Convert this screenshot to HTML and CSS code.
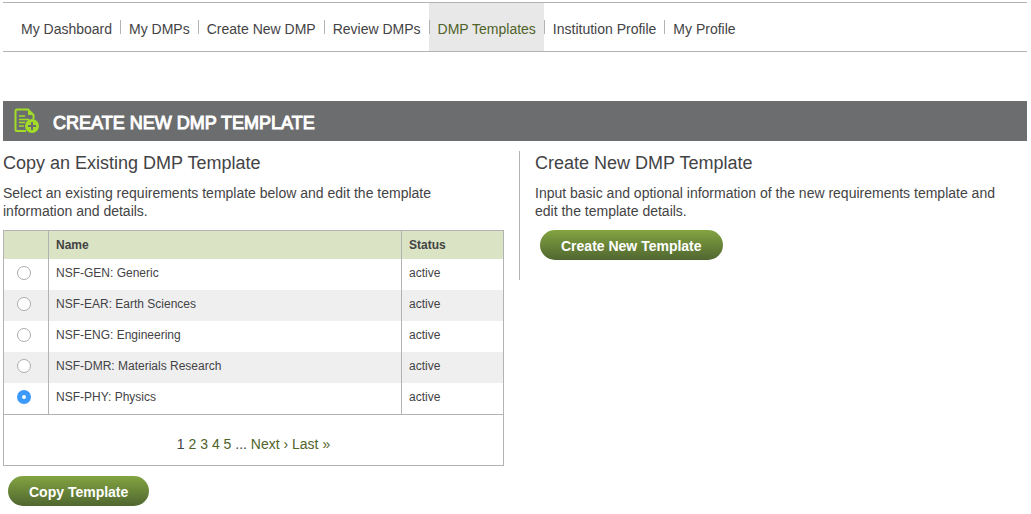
FILE: index.html
```html
<!DOCTYPE html>
<html lang="en">
<head>
<meta charset="utf-8">
<title>Create New DMP Template</title>
<link rel="stylesheet" href="styles.css">
</head>
<body>
<nav class="main-nav">
  <a href="#">My Dashboard</a>
  <a href="#">My DMPs</a>
  <a href="#">Create New DMP</a>
  <a href="#">Review DMPs</a>
  <a href="#" class="current" aria-current="page">DMP Templates</a>
  <a href="#">Institution Profile</a>
  <a href="#">My Profile</a>
</nav>
<main>
  <header class="title-bar">
    <svg class="title-icon" viewBox="0 0 26 26" aria-hidden="true">
      <path d="M12 23H3Q1.500 23 1.500 21.500V3Q1.500 1.500 3 1.500H14L19.500 7V11" fill="none" stroke="#a0dc28" stroke-width="2"/>
      <path d="M14 1V7H20Z" fill="#a0dc28"/>
      <path d="M5 8H11M5 11.500H15M5 14.500H11M5 18H10" fill="none" stroke="#a0dc28" stroke-width="1.500"/>
      <circle cx="18" cy="18" r="7" fill="#a0dc28"/>
      <path d="M18 14V22M14 18H22" stroke="#6c6d6f" stroke-width="2"/>
    </svg>
    <h1>CREATE NEW DMP TEMPLATE</h1>
  </header>
  <div class="columns">
    <section class="copy">
      <h2>Copy an Existing DMP Template</h2>
      <p>Select an existing requirements template below and edit the template information and details.</p>
      <form>
        <table class="templates">
          <thead>
            <tr><th class="pick" aria-label="Select"></th><th>Name</th><th class="status">Status</th></tr>
          </thead>
          <tbody>
            <tr><td class="pick"><input type="radio" name="template" id="gen"></td><td><label for="gen">NSF-GEN: Generic</label></td><td>active</td></tr>
            <tr><td class="pick"><input type="radio" name="template" id="ear"></td><td><label for="ear">NSF-EAR: Earth Sciences</label></td><td>active</td></tr>
            <tr><td class="pick"><input type="radio" name="template" id="eng"></td><td><label for="eng">NSF-ENG: Engineering</label></td><td>active</td></tr>
            <tr><td class="pick"><input type="radio" name="template" id="dmr"></td><td><label for="dmr">NSF-DMR: Materials Research</label></td><td>active</td></tr>
            <tr><td class="pick"><input type="radio" name="template" id="phy" checked></td><td><label for="phy">NSF-PHY: Physics</label></td><td>active</td></tr>
          </tbody>
        </table>
        <div class="pages">
          <span>1</span> <a href="#">2</a> <a href="#">3</a> <a href="#">4</a> <a href="#">5</a> ... <a href="#">Next ›</a> <a href="#">Last »</a>
        </div>
        <button type="button" class="pill">Copy Template</button>
      </form>
    </section>
    <section class="create">
      <h2>Create New DMP Template</h2>
      <p>Input basic and optional information of the new requirements template and edit the template details.</p>
      <button type="button" class="pill">Create New Template</button>
    </section>
  </div>
</main>
</body>
</html>
```
FILE: styles.css
```css
* {
  box-sizing: border-box;
}

body {
  margin: 0;
  padding: 2px 4px 8px 3px;
  background: #fff;
  color: #434345;
  font: 14px/18px "Liberation Sans", Arial, Helvetica, sans-serif;
}

a {
  color: #4f6228;
  text-decoration: none;
}

.main-nav {
  display: flex;
  height: 50px;
  padding-left: 9px;
  border-top: 1px solid #b3b3b3;
  border-bottom: 1px solid #b3b3b3;
}

.main-nav a {
  display: flex;
  align-items: center;
  padding: 4px 8px 0 9px;
  color: #434345;
  background: linear-gradient(#b3b3b3, #b3b3b3) 0 17px / 1px 14px no-repeat;
}

.main-nav a:first-child {
  background: none;
}

.main-nav a.current {
  color: #4f6228;
  background-color: #e8e8e8;
}

.title-bar {
  display: flex;
  align-items: center;
  gap: 13px;
  height: 40px;
  margin-top: 49px;
  padding-left: 11px;
  background: #6c6d6f;
  color: #fff;
}

.title-icon {
  width: 26px;
  height: 26px;
}

h1 {
  margin: 0;
  padding-top: 3px;
  font-size: 18px;
  line-height: 22px;
  font-weight: normal;
  -webkit-text-stroke: 1px #fff;
}

.columns {
  display: grid;
  grid-template-columns: 501px minmax(0, 1fr);
  gap: 15px;
  align-items: start;
  padding-top: 10px;
}

h2 {
  margin: 0 0 9px;
  font-size: 18px;
  line-height: 24px;
  font-weight: normal;
}

p {
  margin: 0 0 10px;
  padding-right: 24px;
}

.copy p {
  padding-right: 60px;
}

.create {
  min-height: 129px;
  padding-left: 15px;
  border-left: 1px solid #b3b3b3;
}

.templates {
  width: 100%;
  table-layout: fixed;
  border-collapse: collapse;
  border: 1px solid #b3b3b3;
  font-size: 12px;
  line-height: 16px;
}

.templates th,
.templates td {
  height: 31px;
  padding: 0 7px 2px;
  border-left: 1px solid #b3b3b3;
  text-align: left;
}

.templates th {
  height: 28px;
  padding-bottom: 0;
  background: #dae4c4;
}

.templates .pick {
  width: 45px;
  padding: 0;
  text-align: center;
}

.templates .status {
  width: 102px;
}

.templates tbody tr:nth-child(even) {
  background: #efefef;
}

.templates tbody tr:last-child td {
  height: 32px;
}

input[type="radio"] {
  appearance: none;
  display: block;
  width: 14px;
  height: 14px;
  margin: 0 0 2px 13px;
  border: 1px solid #acacac;
  border-radius: 50%;
  background: #fff;
}

input[type="radio"]:checked {
  border: 5px solid #3b99fc;
}

.pages {
  padding: 20px 0 12px;
  border: 1px solid #b3b3b3;
  border-top: 0;
  text-align: center;
}

.pill {
  display: block;
  height: 30px;
  margin: 0 5px;
  padding: 1px 21px 0;
  border: 0;
  border-radius: 15px;
  background: linear-gradient(#83a441, #506630);
  color: #fff;
  font: bold 14px/18px "Liberation Sans", Arial, Helvetica, sans-serif;
}

.copy .pill {
  margin-top: 10px;
}
```
